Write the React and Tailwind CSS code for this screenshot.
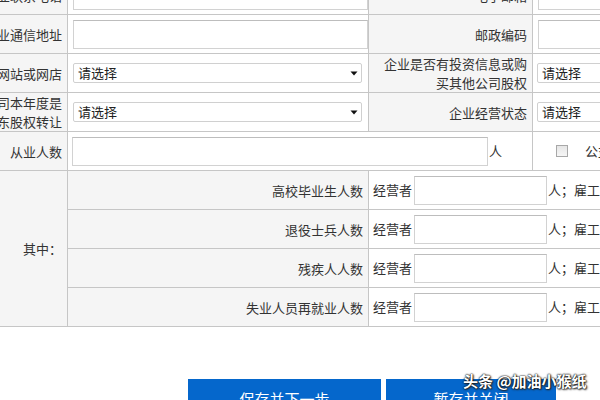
import React from 'react';

const font = { fontFamily: '"Noto Sans CJK SC", "Noto Sans", sans-serif' };

function Label({ children }) {
  return (
    <div className="flex items-center justify-end bg-[#f5f5f5] pr-[5px] text-[13px] leading-[19px] text-[#333]">
      <div className="flex shrink-0 flex-col items-end whitespace-nowrap">{children}</div>
    </div>
  );
}

function TextInput({ className = '' }) {
  return (
    <div
      className={`h-[29px] border border-[#d2d2d2] border-t-[#bdbdbd] bg-white ${className}`}
    ></div>
  );
}

function Select({ className = '' }) {
  return (
    <div
      className={`flex h-[20px] items-center justify-between rounded-[2px] border border-[#d0d0d0] bg-white pl-[4px] pr-[3px] text-[13px] text-[#222] ${className}`}
    >
      <span className="whitespace-nowrap">请选择</span>
      <svg width="8" height="5" viewBox="0 0 8 5" className="shrink-0">
        <path d="M0.5 0.5 L7.5 0.5 L4 4.5 Z" fill="#111" />
      </svg>
    </div>
  );
}

const subRows = ['高校毕业生人数', '退役士兵人数', '残疾人人数', '失业人员再就业人数'];

export default function App() {
  return (
    <div className="relative h-[400px] w-[600px] overflow-hidden bg-white" style={font}>
      {/* form table, scrolled so the first row is cut off */}
      <div className="-mt-[24px] grid w-[740px] auto-rows-[38px] grid-cols-[67px_300px_163px_207px] gap-px border-b border-[#c6c6c6] bg-[#c6c6c6]">
        {/* row 1 */}
        <Label>企业联系电话</Label>
        <div className="flex items-center bg-white pl-[5px]">
          <TextInput className="w-full" />
        </div>
        <Label>电子邮箱</Label>
        <div className="flex items-center bg-white pl-[5px]">
          <TextInput className="w-full" />
        </div>

        {/* row 2 */}
        <Label>企业通信地址</Label>
        <div className="flex items-center bg-white pl-[5px]">
          <TextInput className="w-full" />
        </div>
        <Label>邮政编码</Label>
        <div className="flex items-center bg-white pl-[5px]">
          <TextInput className="w-full" />
        </div>

        {/* row 3 */}
        <Label>是否有网站或网店</Label>
        <div className="flex items-center bg-white pl-[5px]">
          <Select className="w-[289px]" />
        </div>
        <Label>
          <span>企业是否有投资信息或购</span>
          <span>买其他公司股权</span>
        </Label>
        <div className="flex items-center bg-white pl-[4px]">
          <Select className="w-[180px]" />
        </div>

        {/* row 4 */}
        <Label>
          <span>有限责任公司本年度是</span>
          <span>否发生股东股权转让</span>
        </Label>
        <div className="flex items-center bg-white pl-[5px]">
          <Select className="w-[289px]" />
        </div>
        <Label>企业经营状态</Label>
        <div className="flex items-center bg-white pl-[4px]">
          <Select className="w-[180px]" />
        </div>

        {/* row 5 */}
        <Label>从业人数</Label>
        <div className="col-span-2 flex items-center bg-white pl-[4px] text-[13px] text-[#333]">
          <TextInput className="w-[416px]" />
          <span className="ml-[1px]">人</span>
        </div>
        <div className="flex items-center bg-white pl-[23px] text-[13px] text-[#333]">
          <div className="h-[12px] w-[12px] border border-[#a8a8a8] bg-gradient-to-b from-[#e6e6e6] to-[#f6f6f6]"></div>
          <span className="ml-[17px] whitespace-nowrap">公益性岗位人数</span>
        </div>

        {/* 其中 */}
        <div className="row-span-4 flex items-center justify-end bg-[#f5f5f5] pr-[5px] text-[13px] text-[#333]">
          其中：
        </div>
        {subRows.map((label) => (
          <React.Fragment key={label}>
            <Label>{label}</Label>
            <div className="col-span-2 flex items-center bg-white pl-[4px] text-[13px] text-[#333]">
              <span className="whitespace-nowrap">经营者</span>
              <TextInput className="ml-[2px] w-[133px] shrink-0" />
              <span className="ml-[1px] whitespace-nowrap">人；雇工</span>
              <TextInput className="ml-[2px] w-[60px] shrink-0" />
            </div>
          </React.Fragment>
        ))}
      </div>

      {/* buttons */}
      <div className="mt-[52px] flex gap-[5px] pl-[188px]">
        <button className="h-[40px] w-[193px] bg-[#0567cc] text-[15px] leading-[40px] text-white">
          保存并下一步
        </button>
        <button className="h-[40px] w-[170px] bg-[#0567cc] text-[15px] leading-[40px] text-white">
          暂存并关闭
        </button>
      </div>

      {/* watermark */}
      <div className="absolute left-[463px] top-[371px] whitespace-nowrap text-[15px] font-bold leading-[20px] text-white [text-shadow:0_0_2px_#000,0_0_1px_#000,1px_1px_2px_#333]">
        头条 @加油小猴纸
      </div>
    </div>
  );
}
